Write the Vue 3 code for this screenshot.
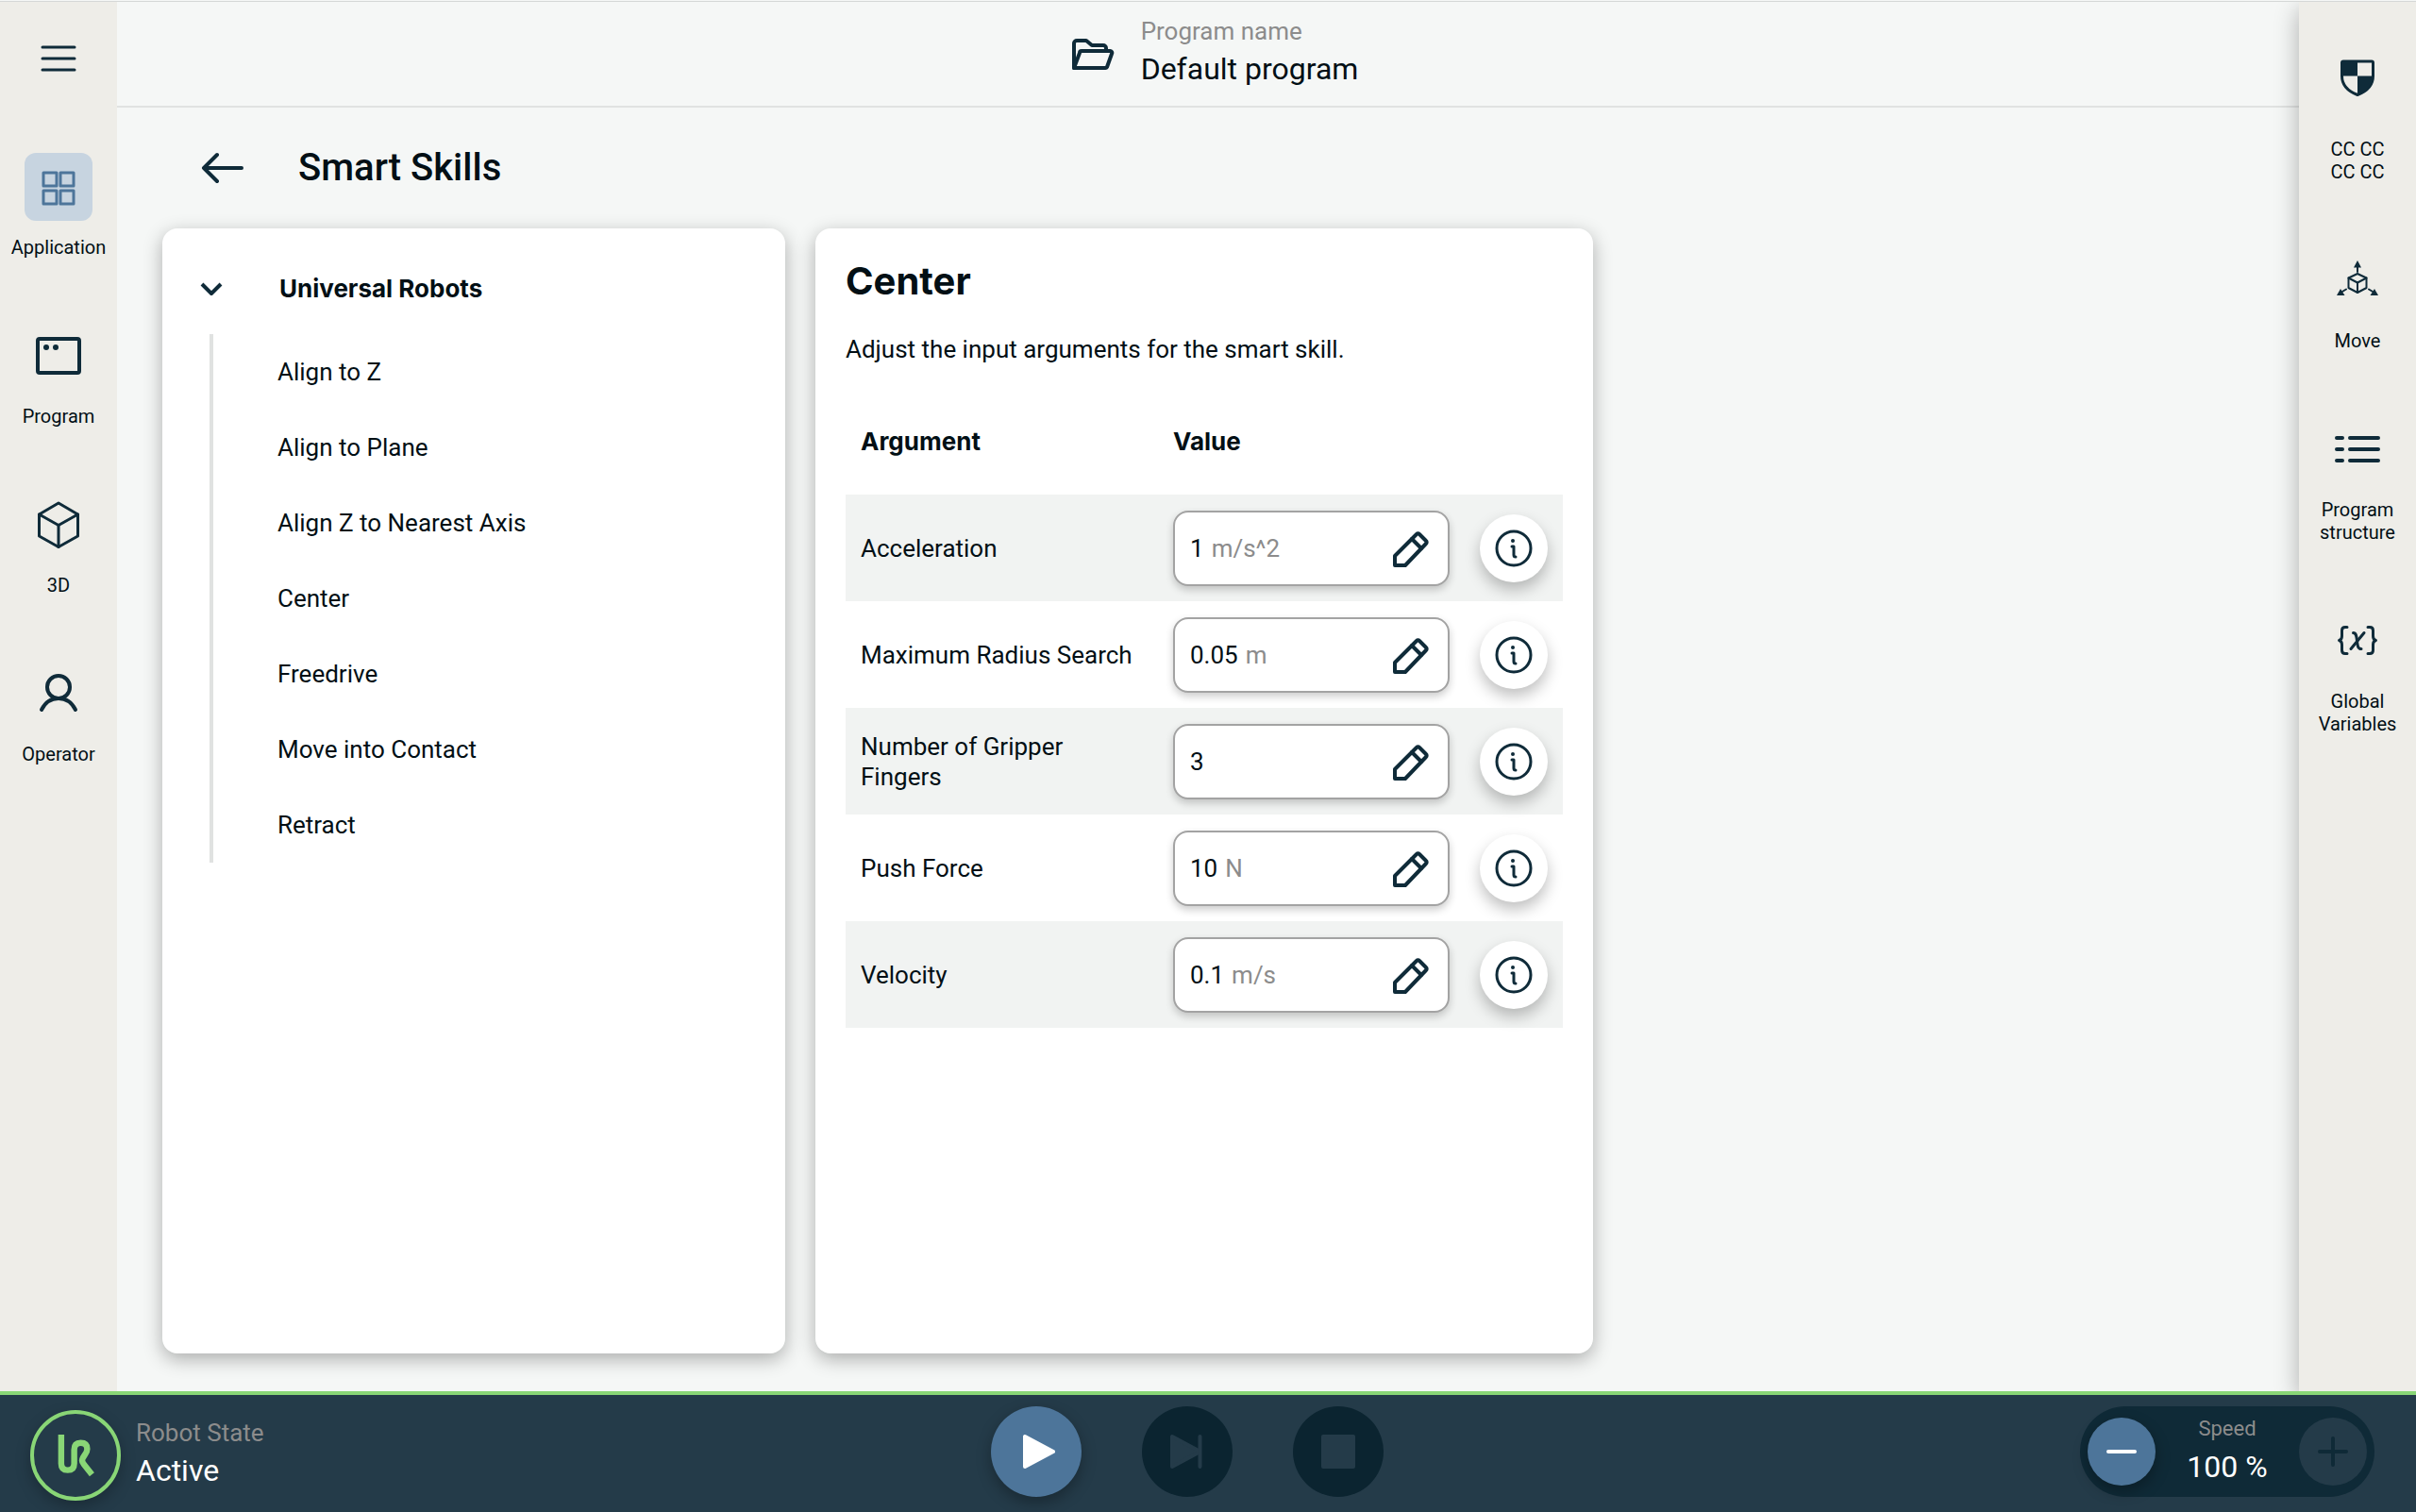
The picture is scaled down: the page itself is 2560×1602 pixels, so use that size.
<script setup>
import { ref } from 'vue'

const activeNav = ref('Application')

// every icon is drawn on a 72x72 grid
const navItems = [
  {
    label: 'Application',
    lines: ['M20 21h14v14h-14z', 'M38 21h14v14h-14z', 'M20 40h14v14h-14z', 'M38 40h14v14h-14z'],
    width: 3
  },
  {
    label: 'Program',
    lines: ['M16 18h40a2 2 0 0 1 2 2v32a2 2 0 0 1 -2 2h-40a2 2 0 0 1 -2 -2v-32a2 2 0 0 1 2 -2z'],
    fills: ['M20 27a3 3 0 1 0 6 0a3 3 0 1 0 -6 0z', 'M30 27a3 3 0 1 0 6 0a3 3 0 1 0 -6 0z'],
    width: 4
  },
  {
    label: '3D',
    lines: ['M36 13l20.500 12v23l-20.500 11.500l-20.500 -11.500v-23z', 'M15.500 25l20.500 11.500l20.500 -11.500', 'M36 36.500v23'],
    width: 3
  },
  {
    label: 'Operator',
    lines: ['M36 17a12 12 0 1 1 0 24a12 12 0 1 1 0 -24z', 'M18 53c4 -8 10 -12 18 -12s14 4 18 12'],
    width: 4
  }
]

const toolItems = [
  {
    label: ['CC CC', 'CC CC'],
    lines: ['M21 7h30a1.500 1.500 0 0 1 1.500 1.500v14c0 9 -6 16 -16.500 20c-10.500 -4 -16.500 -11 -16.500 -20v-14a1.500 1.500 0 0 1 1.500 -1.500z'],
    fills: ['M19 7h17v15.500h-17z', 'M36 22.500h16.500c-1 9 -6 15.500 -16.500 20z'],
    width: 3
  },
  {
    label: ['Move'],
    lines: ['M36 29l9.500 4.500v10.500l-9.500 5l-9.500 -5v-10.500z', 'M26.500 33.500l9.500 5l9.500 -5M36 38.500v10.500', 'M36 27v-6', 'M24 45.500l-5 3M48 45.500l5 3'],
    fills: ['M36 15l4 7.500h-8z', 'M14 52l4 -7l4.500 7z', 'M58 52l-4 -7l-4.500 7z'],
    width: 2
  },
  {
    label: ['Program', 'structure'],
    lines: ['M14 24h6M28 24h30', 'M14 36h6M28 36h30', 'M14 48h6M28 48h30'],
    width: 4
  },
  {
    label: ['Global', 'Variables'],
    lines: ['M25 21.500h-2c-2.500 0 -3.500 1 -3.500 3.500v6c0 2.500 -1 4 -3 4.500c2 .5 3 2 3 4.500v6c0 2.500 1 3.500 3.500 3.500h2', 'M47 21.500h2c2.500 0 3.500 1 3.500 3.500v6c0 2.500 1 4 3 4.500c-2 .5 -3 2 -3 4.500v6c0 2.500 -1 3.500 -3.500 3.500h-2', 'M31.500 27.500c3 0 3.500 3 4 8.500s1 8.500 4.500 8.500', 'M43 27.500l-14 17'],
    width: 3
  }
]

const skills = [
  'Align to Z',
  'Align to Plane',
  'Align Z to Nearest Axis',
  'Center',
  'Freedrive',
  'Move into Contact',
  'Retract'
]

const args = ref([
  { id: 'acceleration', name: 'Acceleration', value: '1', unit: 'm/s^2' },
  { id: 'radius', name: 'Maximum Radius Search', value: '0.05', unit: 'm' },
  { id: 'fingers', name: 'Number of Gripper Fingers', value: '3', unit: '' },
  { id: 'force', name: 'Push Force', value: '10', unit: 'N' },
  { id: 'velocity', name: 'Velocity', value: '0.1', unit: 'm/s' }
])
</script>

<template>
  <div class="app">
    <div class="workspace">
      <nav class="sidebar sidebar-left">
        <button class="menu-btn" aria-label="Menu">
          <svg viewBox="0 0 72 72" class="icon">
            <path d="M19 24h34M19 36h34M19 48h34" stroke-width="3" />
          </svg>
        </button>
        <div class="nav-items">
          <button
            v-for="item in navItems"
            :key="item.label"
            class="side-item"
            :class="{ active: item.label === activeNav }"
            @click="activeNav = item.label"
          >
            <svg viewBox="0 0 72 72" class="icon">
              <path v-for="d in item.lines" :key="d" :d="d" :stroke-width="item.width" />
              <path v-for="d in item.fills" :key="d" :d="d" class="solid" />
            </svg>
            <span class="side-label">{{ item.label }}</span>
          </button>
        </div>
      </nav>

      <div class="content">
        <header class="topbar">
          <button class="folder-btn" aria-label="Open program">
            <svg viewBox="0 0 48 40" class="icon">
              <path d="M5 35v-26a3 3 0 0 1 3 -3h10l6 5h12a3 3 0 0 1 3 3v2" stroke-width="4" />
              <path d="M5 35l6 -16a2 2 0 0 1 2 -2h30a2 2 0 0 1 2 3l-5 14a2 2 0 0 1 -2 1z" stroke-width="4" />
            </svg>
          </button>
          <div class="program">
            <span class="caption">Program name</span>
            <span class="program-name">Default program</span>
          </div>
        </header>

        <main class="page">
          <div class="page-head">
            <button class="back-btn" aria-label="Back">
              <svg viewBox="0 0 48 36" class="icon">
                <path d="M18 4l-14 14l14 14M4 18h40" stroke-width="4" />
              </svg>
            </button>
            <h1>Smart Skills</h1>
          </div>

          <div class="cards">
            <section class="card skills">
              <button class="group-head">
                <svg viewBox="0 0 24 24" class="icon chevron">
                  <path d="M2 7l10 10l10 -10" stroke-width="4" stroke-linecap="butt" />
                </svg>
                <span class="group-name">Universal Robots</span>
              </button>
              <ul class="skill-list">
                <li v-for="skill in skills" :key="skill">
                  <button class="skill">{{ skill }}</button>
                </li>
              </ul>
            </section>

            <section class="card detail">
              <h2>Center</h2>
              <p>Adjust the input arguments for the smart skill.</p>
              <table>
                <colgroup>
                  <col class="col-name" />
                  <col class="col-value" />
                  <col class="col-info" />
                </colgroup>
                <thead>
                  <tr>
                    <th>Argument</th>
                    <th>Value</th>
                    <th></th>
                  </tr>
                </thead>
                <tbody>
                  <tr v-for="arg in args" :key="arg.id">
                    <td><label :for="arg.id">{{ arg.name }}</label></td>
                    <td>
                      <div class="field">
                        <input :id="arg.id" v-model="arg.value" type="text" />
                        <span class="unit">{{ arg.unit }}</span>
                        <svg viewBox="0 0 40 40" class="icon pencil">
                          <path d="M4 38v-10l23 -23a2 2 0 0 1 3 0l7 7a2 2 0 0 1 0 3l-22 23z" stroke-width="4" />
                          <path d="M22 10l10 10" stroke-width="4" />
                        </svg>
                      </div>
                    </td>
                    <td>
                      <button class="info-btn" :aria-label="'About ' + arg.name">
                        <svg viewBox="0 0 40 40" class="icon info">
                          <circle cx="20" cy="20" r="18" stroke-width="3" />
                          <path d="M18 18h2v9q0 2 2 2" stroke-width="3" />
                          <circle cx="19" cy="12" r="2" class="solid" />
                        </svg>
                      </button>
                    </td>
                  </tr>
                </tbody>
              </table>
            </section>
          </div>
        </main>
      </div>

      <aside class="sidebar sidebar-right">
        <button v-for="item in toolItems" :key="item.label[0]" class="side-item">
          <svg viewBox="0 0 72 72" class="icon">
            <path v-for="d in item.lines" :key="d" :d="d" :stroke-width="item.width" />
            <path v-for="d in item.fills" :key="d" :d="d" class="solid" />
          </svg>
          <span class="side-label">
            <span v-for="(line, i) in item.label" :key="i">{{ line }}</span>
          </span>
        </button>
      </aside>
    </div>

    <footer class="footer">
      <div class="robot">
        <button class="robot-btn" aria-label="Robot state">
          <svg viewBox="0 0 96 96">
            <path d="M31.500 24v33.500q0 7.500 7.500 7.500t7.500 -7.500v-16q0 -8 7.500 -8t7.500 7q0 3 -2.500 6.500l-2.500 4q-2 3.500 1 7l9.500 12" />
          </svg>
        </button>
        <div class="state">
          <span class="caption">Robot State</span>
          <span class="state-name">Active</span>
        </div>
      </div>

      <div class="playback">
        <button class="round-btn play" aria-label="Play">
          <svg viewBox="0 0 96 96">
            <path d="M36 32v32l30 -16z" />
          </svg>
        </button>
        <button class="round-btn" aria-label="Step" disabled>
          <svg viewBox="0 0 96 96">
            <path d="M32 32v32l28 -15v-2z" />
            <path d="M61.500 32v32" class="bar" />
          </svg>
        </button>
        <button class="round-btn" aria-label="Stop" disabled>
          <svg viewBox="0 0 96 96">
            <path d="M32 32h32v32h-32z" />
          </svg>
        </button>
      </div>

      <div class="speed">
        <button class="speed-btn minus" aria-label="Slower">
          <svg viewBox="0 0 72 72">
            <path d="M22 36h28" />
          </svg>
        </button>
        <div class="speed-text">
          <span class="speed-caption">Speed</span>
          <span class="speed-value">100 %</span>
        </div>
        <button class="speed-btn" aria-label="Faster" disabled>
          <svg viewBox="0 0 72 72">
            <path d="M22 36h28M36 22v28" />
          </svg>
        </button>
      </div>
    </footer>
  </div>
</template>

<style>
body {
  margin: 0;
  background-color: #f5f7f6;
}
</style>

<style scoped>
.app {
  display: flex;
  flex-direction: column;
  min-height: 100vh;
  box-sizing: border-box;
  border-top: 1px solid #f5f7f6;
  font-family: Roboto, sans-serif;
  font-size: 26px;
  line-height: 32px;
  color: #020f15;
}
button {
  padding: 0;
  border: none;
  background: none;
  font: inherit;
  color: inherit;
  cursor: pointer;
}
svg {
  display: block;
}
.icon {
  fill: none;
  stroke: #0f2b39;
  stroke-linecap: round;
  stroke-linejoin: round;
}
.icon .solid {
  fill: #0f2b39;
  stroke: none;
}
.workspace {
  flex: 1;
  display: flex;
  border-top: 1px solid #d5d8d7;
}

/* side bars */
.sidebar {
  width: 124px;
  flex-shrink: 0;
  box-sizing: border-box;
  background-color: #eeede8;
}
.sidebar-left {
  padding-top: 24px;
}
.nav-items,
.sidebar-right {
  display: flex;
  flex-direction: column;
  gap: 67px;
}
.nav-items {
  margin-top: 64px;
}
.sidebar-right {
  position: relative;
  padding-top: 56px;
  box-shadow: 0 8px 24px rgba(0, 0, 0, 0.3);
  clip-path: inset(0 0 0 -40px);
}
.menu-btn {
  display: flex;
  justify-content: center;
  width: 100%;
}
.menu-btn .icon,
.side-item .icon {
  width: 72px;
  height: 72px;
}
.side-item {
  display: flex;
  flex-direction: column;
  align-items: center;
  gap: 16px;
}
.side-item.active .icon {
  border-radius: 12px;
  background-color: #c7d4e0;
  stroke: #4d759a;
}
.side-label {
  display: flex;
  flex-direction: column;
  font-size: 20px;
  line-height: 24px;
}

/* top bar */
.content {
  flex: 1;
  min-width: 0;
  display: flex;
  flex-direction: column;
}
.topbar {
  display: flex;
  justify-content: center;
  align-items: center;
  gap: 28px;
  height: 110px;
  padding-left: 12px;
  border-bottom: 2px solid #e0e2e1;
}
.folder-btn .icon {
  width: 48px;
  height: 40px;
}
.program,
.state {
  display: flex;
  flex-direction: column;
}
.caption {
  color: #8c8c8c;
}
.program-name,
.state-name {
  font-size: 32px;
  line-height: 48px;
}

/* page */
.page {
  flex: 1;
  display: flex;
  flex-direction: column;
  padding: 0 48px 40px;
}
.page-head {
  display: flex;
  align-items: center;
  gap: 56px;
  height: 128px;
  padding-left: 40px;
}
.back-btn .icon {
  width: 48px;
  height: 36px;
}
h1 {
  margin: 0;
  font-size: 40px;
  line-height: 48px;
  font-weight: 500;
}
.cards {
  flex: 1;
  display: flex;
  gap: 32px;
}
.card {
  box-sizing: border-box;
  border-radius: 16px;
  background-color: #fff;
  box-shadow: 0 6px 20px rgba(0, 0, 0, 0.3);
}
.skills {
  width: 660px;
  padding: 32px 40px;
}
.group-head {
  display: flex;
  align-items: center;
  gap: 60px;
  width: 100%;
  height: 64px;
}
.chevron {
  width: 24px;
  height: 24px;
}
.group-name,
th {
  font-family: Inter, sans-serif;
  font-size: 26px;
  font-weight: 700;
}
.skill-list {
  margin: 16px 0 0 10px;
  padding: 0;
  border-left: 4px solid #e0e2e1;
  list-style: none;
}
.skill {
  display: block;
  width: 100%;
  height: 80px;
  padding-left: 68px;
  text-align: left;
}
.detail {
  width: 824px;
  padding: 32px;
}
h2 {
  margin: 0;
  font-family: Inter, sans-serif;
  font-size: 40px;
  line-height: 48px;
  font-weight: 700;
}
p {
  margin: 32px 0 24px;
}
table {
  width: 100%;
  table-layout: fixed;
  border-collapse: collapse;
}
.col-name {
  width: 347px;
}
.col-info {
  width: 88px;
}
th {
  height: 112px;
  padding: 2px 0 0;
  text-align: left;
}
td {
  height: 113px;
  padding: 0;
}
th:first-child,
td:first-child {
  padding-left: 16px;
}
tbody tr:nth-child(odd) {
  background-color: #f1f3f2;
}
td label {
  display: block;
  padding-right: 32px;
}
.field {
  display: flex;
  align-items: center;
  gap: 8px;
  height: 80px;
  margin-right: 32px;
  padding: 0 20px 0 16px;
  box-sizing: border-box;
  border: 2px solid #a3a3a3;
  border-radius: 16px;
  background-color: #fff;
  box-shadow: 0 4px 8px rgba(0, 0, 0, 0.2);
}
.field input {
  field-sizing: content;
  padding: 0;
  border: none;
  outline: none;
  background: none;
  font: inherit;
  color: inherit;
}
.unit {
  color: #8c8c8c;
}
.pencil {
  width: 40px;
  height: 40px;
  margin-left: auto;
}
.info-btn {
  display: flex;
  align-items: center;
  justify-content: center;
  width: 72px;
  height: 72px;
  border-radius: 50%;
  background-color: #fff;
  box-shadow: 0 8px 16px rgba(0, 0, 0, 0.25);
}
.info {
  width: 40px;
  height: 40px;
}

/* footer */
.footer {
  position: relative;
  display: grid;
  grid-template-columns: 1fr auto 1fr;
  align-items: start;
  height: 112px;
  padding: 12px 44px 0 32px;
  border-top: 4px solid #89d676;
  background-color: #243b49;
  color: #fff;
}
.robot {
  display: flex;
  gap: 16px;
  padding-top: 4px;
}
.robot-btn {
  box-sizing: border-box;
  width: 96px;
  height: 96px;
  border: 4px solid #89d676;
  border-radius: 50%;
  box-shadow: 0 6px 16px rgba(0, 0, 0, 0.25);
}
.robot-btn svg {
  fill: none;
  stroke: #89d676;
  stroke-width: 7;
}
.state {
  padding-top: 8px;
}
.playback {
  display: flex;
  gap: 64px;
  margin-right: 32px;
}
.round-btn {
  width: 96px;
  height: 96px;
  border-radius: 50%;
  background-color: #0b2430;
}
.round-btn svg {
  fill: #243b49;
  stroke: #243b49;
  stroke-width: 4;
  stroke-linejoin: round;
  stroke-linecap: round;
}
.round-btn.play {
  background-color: #4d759a;
  box-shadow: 0 6px 16px rgba(0, 0, 0, 0.3);
}
.round-btn.play svg {
  fill: #fff;
  stroke: #fff;
}
.speed {
  justify-self: end;
  display: flex;
  align-items: center;
  justify-content: space-between;
  box-sizing: border-box;
  width: 312px;
  height: 96px;
  padding: 0 8px;
  border-radius: 48px;
  background-color: #0f2a37;
}
.speed-btn {
  width: 72px;
  height: 72px;
  border-radius: 50%;
  background-color: #243b49;
}
.speed-btn svg {
  stroke: #0f2a37;
  stroke-width: 4;
  stroke-linecap: round;
}
.speed-btn.minus {
  background-color: #4d759a;
  box-shadow: 0 6px 16px rgba(0, 0, 0, 0.3);
}
.speed-btn.minus svg {
  stroke: #fff;
}
.speed-text {
  display: flex;
  flex-direction: column;
  align-items: center;
}
.speed-caption {
  font-size: 22px;
  color: #8c8c8c;
}
.speed-value {
  font-size: 32px;
  line-height: 48px;
}
</style>
